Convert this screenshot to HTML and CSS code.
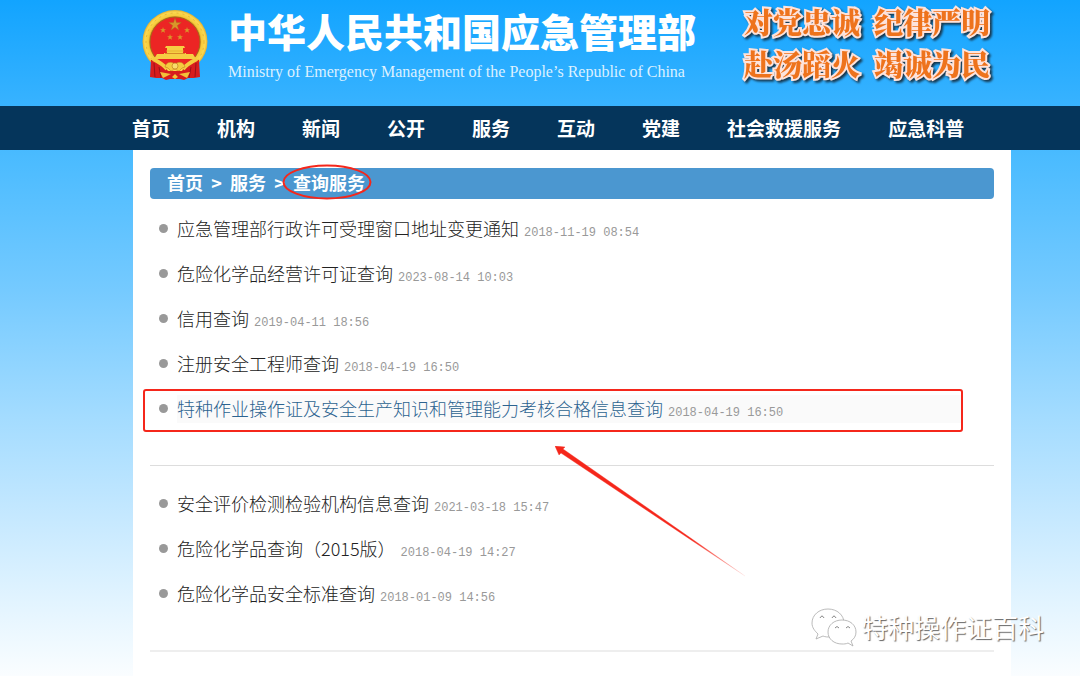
FILE: index.html
```html
<!DOCTYPE html>
<html lang="zh-CN">
<head>
<meta charset="utf-8">
<meta name="viewport" content="width=device-width, initial-scale=1">
<title>查询服务 - 中华人民共和国应急管理部</title>
<link rel="stylesheet" href="styles.css">
</head>
<body>
<header class="header">
  <svg class="emblem" viewBox="0 0 66 70" aria-hidden="true">
    <defs>
      <radialGradient id="gold" cx="50%" cy="50%" r="50%">
        <stop offset=".76" stop-color="#c98a1c"/>
        <stop offset=".82" stop-color="#f6cb3c"/>
        <stop offset=".93" stop-color="#fbd850"/>
        <stop offset="1" stop-color="#e4ae2e"/>
      </radialGradient>
    </defs>
    <ellipse cx="33" cy="31.500" rx="32.500" ry="31.500" fill="url(#gold)"/>
    <circle cx="33" cy="32" r="29" fill="none" stroke="#d79a24" stroke-width="1" stroke-dasharray="2 4" opacity=".5"/>
    <circle cx="33" cy="32" r="25" fill="#ec2524" stroke="#a9641a"/>
    <g fill="#d9962a">
      <path d="M33 8l1.500 4.600h4.900l-4 2.900 1.500 4.700-3.900-2.900-4 2.900 1.600-4.700-4-2.900h4.900z" stroke="#a7661b" stroke-width=".4"/>
      <path d="M21 17l.8 2.200H24l-1.700 1.300.7 2.300-2-1.300-1.900 1.300.7-2.300-1.800-1.300h2.300zM45 17l.8 2.200H48l-1.700 1.300.7 2.300-2-1.300-1.900 1.300.7-2.300-1.800-1.300h2.300zM28 24l.8 2.200H31l-1.700 1.300.7 2.300-2-1.300-1.900 1.300.7-2.300-1.800-1.300h2.300zM38 24l.8 2.200H41l-1.700 1.300.7 2.300-2-1.300-1.900 1.300.7-2.300-1.800-1.300h2.300z"/>
    </g>
    <path d="M24 36h18l1 2h-2v5h3v1h7l3 5H12l3-5h7v-1h3v-5h-2z" fill="#f6ce43"/>
    <path d="M23 43.500h20" stroke="#c96f1b" stroke-width=".7"/>
    <path d="M24 41h18" stroke="#e2a82f" stroke-width=".7"/>
    <path d="M9 50c7 0 12 4 17 11h14c5-7 10-11 17-11l1 17-6 1h-6l-4 2-4-1H28l-4 1-4-2h-6l-6-1z" fill="#d81c1e"/>
    <path d="M12 53l1 14M17 57l2 11M54 53l-1 14M49 57l-2 11" stroke="#98121a" stroke-width="1"/>
    <path d="M11 49c6 3 10 5 14 10M55 49c-6 3-10 5-14 10" stroke="#f5cb40" stroke-width="4" fill="none"/>
    <path d="M23 57c1-5 6-6 10-3 4-3 9-2 10 3l-3 1-3 3-4-2-4 2-3-3z" fill="#f5cb40" stroke="#bd741c" stroke-width=".5"/>
    <circle cx="33" cy="56" r="3" fill="#f9dc6b" stroke="#c28020" stroke-width=".7"/>
    <path d="M18 62l11 2-8 4zM48 62l-11 2 8 4zM30 67l3-3 3 3-3 2z" fill="#f2c239"/>
  </svg>
  <div class="brand">
    <h1 class="brand-name">中华人民共和国应急管理部</h1>
    <p class="brand-en">Ministry of Emergency Management of the People’s Republic of China</p>
  </div>
  <div class="slogan">
    <span>对党忠诚</span><span>纪律严明</span>
    <span>赴汤蹈火</span><span>竭诚为民</span>
  </div>
</header>

<nav class="nav" aria-label="主导航">
  <a href="#">首页</a>
  <a href="#">机构</a>
  <a href="#">新闻</a>
  <a href="#">公开</a>
  <a href="#">服务</a>
  <a href="#">互动</a>
  <a href="#">党建</a>
  <a href="#">社会救援服务</a>
  <a href="#">应急科普</a>
</nav>

<main class="content">
  <nav class="crumbs" aria-label="当前位置">
    <a href="#">首页</a><span>&gt;</span><a href="#">服务</a><span>&gt;</span><a class="current" href="#">查询服务<svg class="ring" viewBox="0 0 90 36" aria-hidden="true"><ellipse cx="45" cy="18" rx="43.500" ry="16.500" fill="none" stroke="#f5271b" stroke-width="2"/></svg></a>
  </nav>

  <ul class="list">
    <li><div class="entry"><a href="#">应急管理部行政许可受理窗口地址变更通知</a><time>2018-11-19 08:54</time></div></li>
    <li><div class="entry"><a href="#">危险化学品经营许可证查询</a><time>2023-08-14 10:03</time></div></li>
    <li><div class="entry"><a href="#">信用查询</a><time>2019-04-11 18:56</time></div></li>
    <li><div class="entry"><a href="#">注册安全工程师查询</a><time>2018-04-19 16:50</time></div></li>
    <li class="marked"><div class="entry"><a href="#">特种作业操作证及安全生产知识和管理能力考核合格信息查询</a><time>2018-04-19 16:50</time></div>
      <svg class="arrow" viewBox="0 0 192 132" aria-hidden="true">
        <defs>
          <linearGradient id="fade" gradientUnits="userSpaceOnUse" x1="0" y1="0" x2="190" y2="130">
            <stop offset=".72" stop-color="#f5271b"/>
            <stop offset="1" stop-color="#f5271b" stop-opacity=".1"/>
          </linearGradient>
        </defs>
        <path d="M0 0 10 1 8 3 190 130 6 7 4 9z" fill="url(#fade)" stroke="url(#fade)" stroke-width=".4"/>
      </svg>
    </li>
  </ul>
  <ul class="list">
    <li><div class="entry"><a href="#">安全评价检测检验机构信息查询</a><time>2021-03-18 15:47</time></div></li>
    <li><div class="entry"><a href="#">危险化学品查询（2015版）</a><time>2018-04-19 14:27</time></div></li>
    <li><div class="entry"><a href="#">危险化学品安全标准查询</a><time>2018-01-09 14:56</time></div></li>
  </ul>
</main>

<div class="watermark">
  <svg viewBox="0 0 46 40" aria-hidden="true">
    <g fill="#fff" stroke="#aaa" stroke-width=".8">
      <path d="M17 2C8 2 1 8 1 16c0 5 3 8 6 11l-2 5 7-3c2 1 5 1 7 1 8 0 14-6 14-14S26 2 17 2z"/>
      <path d="M31 13c-8 0-14 5-14 12s6 12 14 12c2 0 4 0 6-1l5 3-2-5c3-2 5-5 5-9 0-7-6-12-14-12z"/>
    </g>
    <path d="M9 11q2-4 4 0M21 11q2-4 4 0M24 21q2-3 4 0M35 21q2-3 4 0" fill="none" stroke="#888" stroke-width="1"/>
  </svg>
  <span>特种操作证百科</span>
</div>
</body>
</html>
```
FILE: styles.css
```css
* {
  box-sizing: border-box;
}

body {
  position: relative;
  display: flex;
  flex-direction: column;
  min-height: 100vh;
  margin: 0;
  font-family: "Noto Sans CJK SC", sans-serif;
  background: linear-gradient(#12a4ff 0, #39b3ff 16%, #4abbff 23%, #75caff 43%, #a4dcff 62%, #c2e7ff 75%, #e2f4ff 89%, #fafdff 100%);
}

a {
  color: inherit;
  text-decoration: none;
}

.header {
  display: flex;
  align-items: flex-start;
  height: 106px;
  padding-left: 142px;
  white-space: nowrap;
}

.emblem {
  flex: none;
  width: 66px;
  height: 70px;
  margin: 10px 20px 0 0;
}

.brand {
  flex: none;
  margin-right: 48px;
  padding-top: 2px;
  color: #fff;
}

.brand-name {
  margin: 0 0 2px;
  font-size: 39px;
  line-height: 56px;
  font-weight: 900;
}

.brand-en {
  margin: 0;
  font: 16px/24px "Liberation Serif", serif;
  color: #dcf1ff;
}

.slogan {
  display: grid;
  grid-template-columns: auto auto;
  column-gap: 14px;
  padding-top: 1px;
  font-family: "Noto Serif CJK SC", "Noto Sans CJK SC", serif;
  font-size: 29px;
  font-weight: 900;
  line-height: 42px;
  color: #ee731c;
  -webkit-text-stroke: 4px #fde3dc;
  paint-order: stroke fill;
  filter: drop-shadow(2px 2px 1px #17384f);
}

.nav {
  display: flex;
  align-items: center;
  gap: 47px;
  height: 44px;
  padding: 0 0 2px 132px;
  font-size: 19px;
  font-weight: 700;
  white-space: nowrap;
  color: #fff;
  background: #05355b;
}

.content {
  flex: 1;
  margin: 0 69px 0 133px;
  padding: 18px 17px 0;
  background: #fff;
}

.crumbs {
  display: flex;
  align-items: center;
  height: 31px;
  padding: 0 0 4px 17px;
  border-radius: 4px;
  font-size: 18px;
  font-weight: 700;
  color: #fff;
  background: #4b97d0;
}

.crumbs span {
  width: 27px;
  text-align: center;
}

.current {
  position: relative;
}

.ring {
  position: absolute;
  top: -5px;
  left: -12px;
  width: 92px;
  height: 36px;
}

.list {
  margin: 0;
  padding: 8px 0 33px;
  list-style: none;
  border-bottom: 1px solid #ddd;
}

.list + .list {
  padding-top: 16px;
  border-bottom: 2px solid #eee;
}

.list li {
  position: relative;
  display: flex;
  align-items: center;
  gap: 9px;
  height: 45px;
  padding: 0 32px 2px 9px;
}

.list li::before {
  content: "";
  flex: none;
  width: 9px;
  height: 9px;
  border-radius: 50%;
  background: #999;
}

.entry {
  flex: 1;
  padding-bottom: 2px;
  font-size: 18px;
  font-weight: 300;
  line-height: 26px;
  white-space: nowrap;
  color: #222;
}

.entry time {
  margin-left: 5px;
  font: 12px "Liberation Mono", monospace;
  color: #999;
}

.marked .entry {
  color: #2c6390;
  background: #fafafa;
}

.marked::after {
  content: "";
  position: absolute;
  inset: 2px 31px 0 -7px;
  border: 2px solid #f5271b;
  border-radius: 3px;
}

.arrow {
  position: absolute;
  top: 59px;
  left: 405px;
  width: 192px;
  height: 132px;
}

.watermark {
  position: absolute;
  right: 36px;
  bottom: 29px;
  display: flex;
  align-items: center;
  gap: 5px;
  font-size: 26px;
  line-height: 40px;
  color: #fff;
  text-shadow: 1px 1px 1px #666;
}

.watermark svg {
  width: 46px;
  height: 40px;
}
```
